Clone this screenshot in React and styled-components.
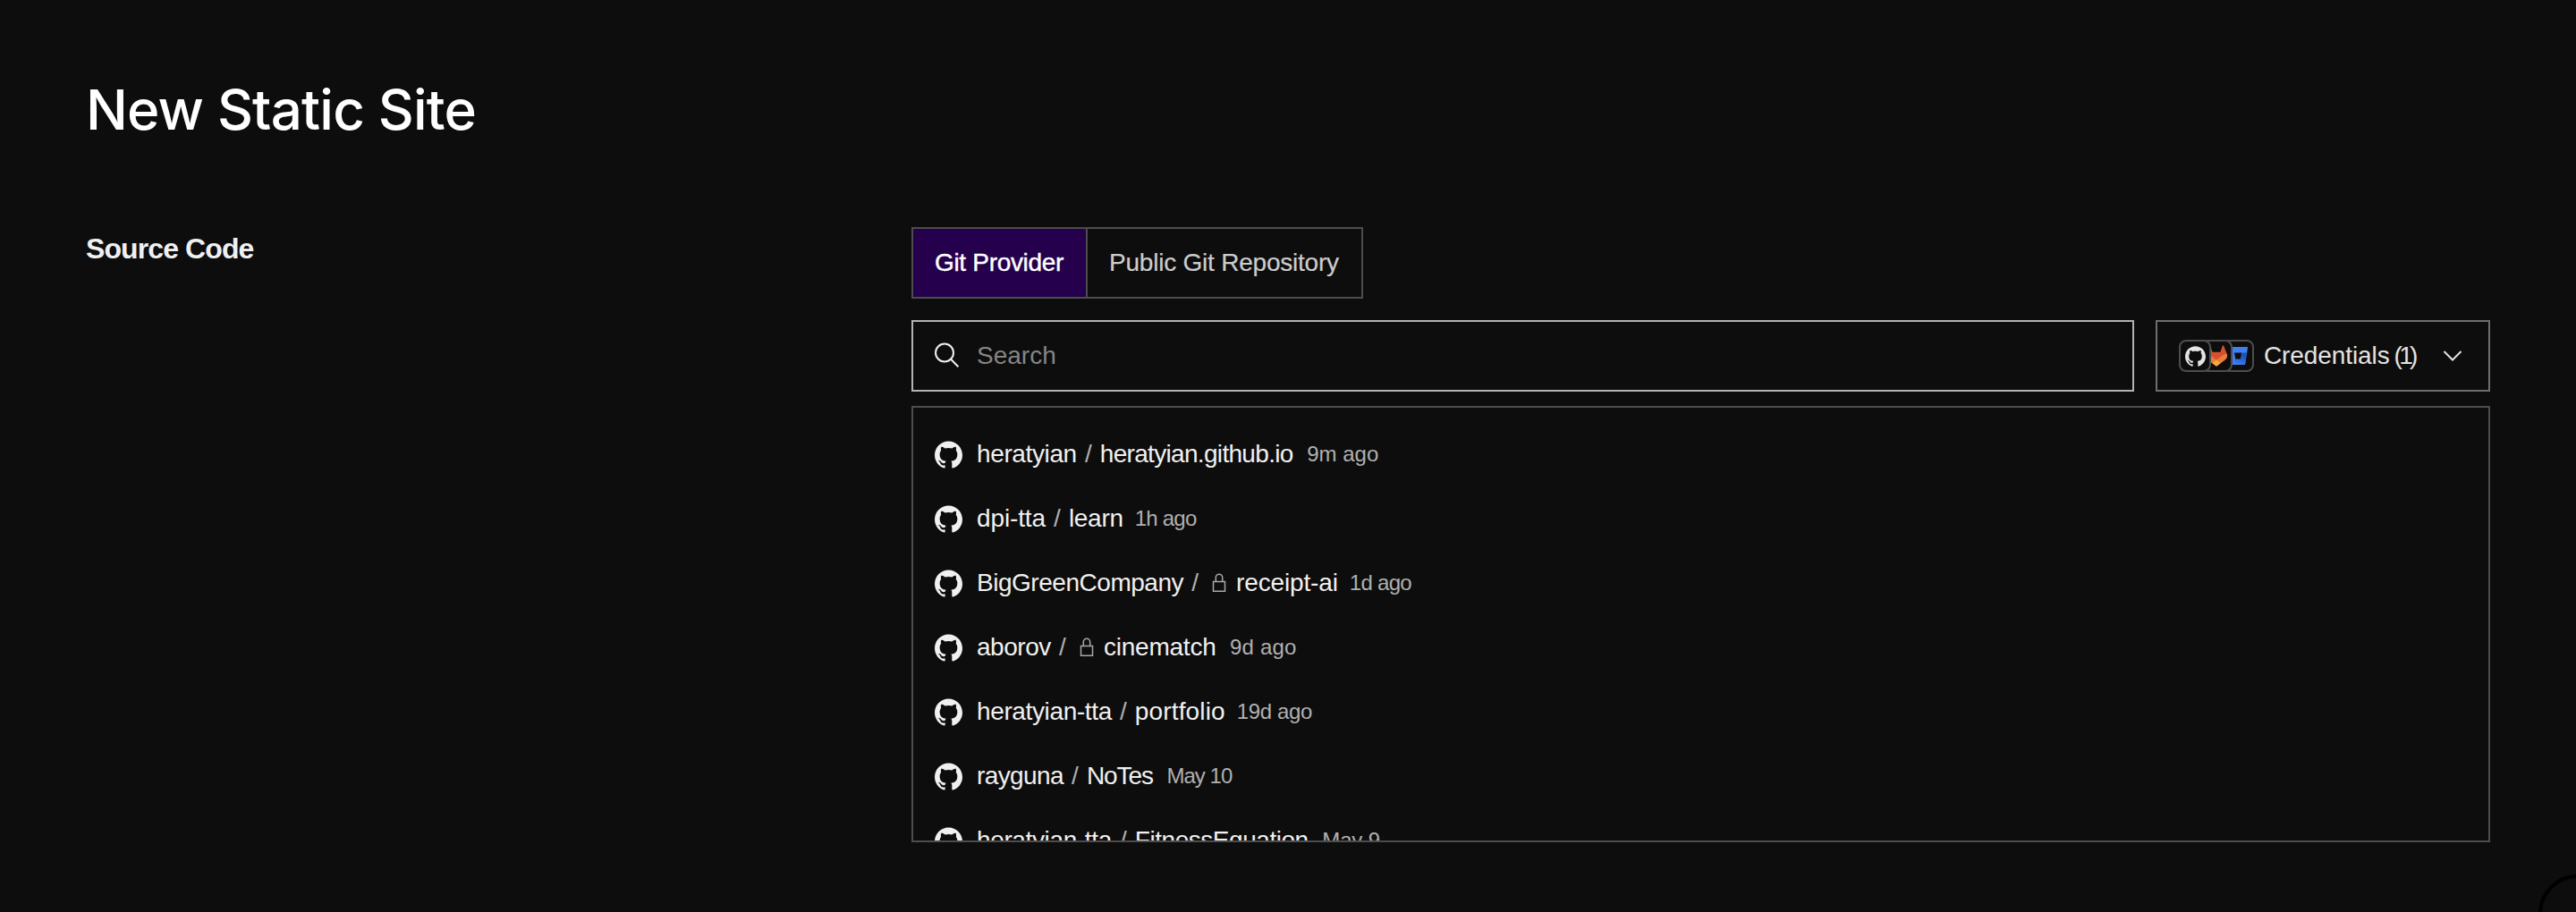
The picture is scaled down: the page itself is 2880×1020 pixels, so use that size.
import React from "react";
import styled, { createGlobalStyle } from "styled-components";

const color = {
  page: "#0d0d0d",
  line: "#4d4d4d",
  lineMid: "#6e6e6e",
  lineStrong: "#b3b3b3",
  text: "#f0f0f0",
  soft: "#cccccc",
  muted: "#b0b0b0",
  placeholder: "#858585",
  accent: "#25004d",
};

const GlobalStyle = createGlobalStyle`
  *, *::before, *::after { box-sizing: border-box; }
  body {
    margin: 0;
    background: ${color.page};
    color: ${color.text};
    font-family: "Liberation Sans", Arial, sans-serif;
    font-size: 28px;
    line-height: 40px;
    white-space: nowrap;
  }
`;

const Page = styled.main`
  position: relative;
  height: 1020px;
  overflow: hidden;
  padding: 83px 96px 0;
`;

const Title = styled.h1`
  margin: 0;
  color: #fff;
  font-family: Inter, sans-serif;
  font-size: 62px;
  font-weight: 500;
  line-height: 80px;
  letter-spacing: -0.83px;
`;

const Section = styled.section`
  display: grid;
  grid-template-columns: 923px 1fr;
  margin-top: 91px;
`;

const SectionTitle = styled.h2`
  margin: 4px 0 0;
  font-size: 32px;
  font-weight: 700;
  line-height: 40px;
  letter-spacing: -0.9px;
`;

const Panel = styled.div`
  display: flex;
  flex-direction: column;
  width: 1765px;
`;

const Tabs = styled.div`
  display: flex;
`;

const Tab = styled.button`
  width: ${(p) => p.$width}px;
  height: 80px;
  margin: 0 0 0 ${(p) => (p.$joined ? -2 : 0)}px;
  padding: 0 0 0 24px;
  border: 2px solid ${color.line};
  background: ${(p) => (p.$active ? color.accent : "transparent")};
  color: ${(p) => (p.$active ? "#fff" : color.soft)};
  font: inherit;
  text-align: left;
  letter-spacing: ${(p) => (p.$active ? -0.32 : -0.22)}px;
  -webkit-text-stroke: ${(p) => (p.$active ? 0.4 : 0.2)}px currentColor;
`;

const Filters = styled.div`
  display: flex;
  gap: 24px;
  margin: 24px 0 16px;
`;

const SearchBox = styled.label`
  flex: 1;
  display: flex;
  align-items: center;
  gap: 17px;
  height: 80px;
  padding: 0 24px;
  border: 2px solid ${color.lineStrong};
`;

const SearchInput = styled.input`
  flex: 1;
  padding: 0;
  border: 0;
  outline: 0;
  background: none;
  color: ${color.text};
  font: inherit;
  &::placeholder { color: ${color.placeholder}; opacity: 1; }
`;

const CredentialsButton = styled.button`
  display: flex;
  align-items: center;
  width: 374px;
  height: 80px;
  padding: 0 29px 0 24px;
  border: 2px solid ${color.lineMid};
  background: none;
  color: #e3e3e3;
  font: inherit;
`;

const ProviderStack = styled.span`
  display: flex;
  margin-right: 11px;
`;

const ProviderChip = styled.span`
  position: relative;
  z-index: ${(p) => p.$layer};
  display: flex;
  align-items: center;
  justify-content: center;
  width: 36px;
  height: 36px;
  margin-left: ${(p) => (p.$overlap ? -12 : 0)}px;
  border: 2px solid ${color.line};
  border-radius: 8px;
  background: ${color.page};
  & > svg { flex: none; }
`;

const CredentialsLabel = styled.span`
  letter-spacing: -0.1px;
`;

const Count = styled.span`
  margin-left: 5px;
  letter-spacing: -3.7px;
`;

const Chevron = styled.svg`
  margin-left: auto;
`;

const RepoList = styled.ul`
  height: 488px;
  margin: 0;
  padding: 16px 0 0;
  border: 2px solid ${color.line};
  list-style: none;
  overflow: hidden;
`;

const RepoRow = styled.li`
  display: flex;
  align-items: center;
  height: 72px;
  padding-left: 24px;
`;

const Name = styled.span`
  letter-spacing: ${(p) => p.$tracking}px;
`;

const Owner = styled(Name)`
  margin-left: 16px;
`;

const Slash = styled.span`
  width: 10px;
  margin: 0 8px;
  color: ${color.muted};
  text-align: center;
`;

const Lock = styled.svg`
  margin: 0 11px 0 6px;
`;

const Age = styled.span`
  margin-left: ${(p) => (p.$tight ? 13 : 15.5)}px;
  color: ${color.muted};
  font-size: 24px;
  letter-spacing: ${(p) => p.$tracking}px;
`;

const HelpButton = styled.div`
  position: absolute;
  left: 2838px;
  top: 978px;
  width: 88px;
  height: 88px;
  border: 4px solid #000;
  border-radius: 50%;
`;

const GithubMark = ({ size, fill = color.text }) => (
  <svg width={size} height={size} viewBox="0 0 24 24" fill={fill}>
    <path d="M12 .297c-6.63 0-12 5.373-12 12 0 5.303 3.438 9.8 8.205 11.385.6.113.82-.258.82-.577 0-.285-.01-1.04-.015-2.04-3.338.724-4.042-1.61-4.042-1.61C4.422 18.07 3.633 17.7 3.633 17.7c-1.087-.744.084-.729.084-.729 1.205.084 1.838 1.236 1.838 1.236 1.07 1.835 2.809 1.305 3.495.998.108-.776.417-1.305.76-1.605-2.665-.3-5.466-1.332-5.466-5.93 0-1.31.465-2.38 1.235-3.22-.135-.303-.54-1.523.105-3.176 0 0 1.005-.322 3.3 1.23.96-.267 1.98-.399 3-.405 1.02.006 2.04.138 3 .405 2.28-1.552 3.285-1.23 3.285-1.23.645 1.653.24 2.873.12 3.176.765.84 1.23 1.91 1.23 3.22 0 4.61-2.805 5.625-5.475 5.92.42.36.81 1.096.81 2.22 0 1.606-.015 2.896-.015 3.286 0 .315.21.69.825.57C20.565 22.092 24 17.592 24 12.297c0-6.627-5.373-12-12-12" />
  </svg>
);

const GitlabMark = () => (
  <svg width="24" height="24" viewBox="0 0 24 24">
    <clipPath id="fox">
      <path d="m23.6 9.59-.03-.09L20.3.98a.85.85 0 0 0-.34-.4.87.87 0 0 0-1.29.49l-2.2 6.75H7.54L5.33 1.07a.86.86 0 0 0-1.29-.49.86.86 0 0 0-.34.4L.43 9.5l-.03.09a6.07 6.07 0 0 0 2.01 7.01l.04.03 4.98 3.73 2.46 1.86 1.5 1.13a1 1 0 0 0 1.22 0l1.5-1.13 2.46-1.86 5.02-3.76a6.07 6.07 0 0 0 2.01-7.01z" />
    </clipPath>
    <g clipPath="url(#fox)">
      <path fill="#d6502f" d="M0 0h24v24H0z" />
      <path fill="#e97c38" d="M0 9.2c2 .5 3.6 1.2 5 2.2l7 5.1 7-5.1c1.4-1 3-1.7 5-2.2V24H0z" />
      <path fill="#f0aa3f" d="m12 16.5 4.700 3.600L12 24l-4.700-3.900z" />
    </g>
  </svg>
);

const BitbucketMark = () => (
  <svg width="24" height="24" viewBox="0 0 24 24">
    <defs>
      <linearGradient id="bucket" x1="13" y1="10" x2="9" y2="21" gradientUnits="userSpaceOnUse">
        <stop offset="0" stopColor="#1f52b8" />
        <stop offset="1" stopColor="#3e7ff2" />
      </linearGradient>
    </defs>
    <path fill="#3e7ff2" d="M1.800 2h20.500c.5 0 .8.400.7.900l-2.900 18.300c-.1.500-.4.800-.9.800H5.100c-.6 0-1-.4-1.100-.9L1.100 2.900C1 2.400 1.300 2 1.800 2z" />
    <path fill="url(#bucket)" d="M22 8.500h-6L15 15.500H9.300l-5 6.100c.2.200.5.400.8.400h14.100c.5 0 .8-.3.900-.8z" />
    <path fill={color.page} d="M8 8.500h8L15 15.500H9.200z" />
  </svg>
);

const SearchIcon = () => (
  <svg width="30" height="30" viewBox="0 0 30 30" fill="none" stroke="#f0f0f0" strokeWidth="2">
    <circle cx="11" cy="11.500" r="10" />
    <path d="m18.100 18.800 8.300 8.500" />
  </svg>
);

const LockIcon = () => (
  <Lock width="16" height="22" viewBox="0 0 16 22" fill="none" stroke="#a8a8a8" strokeWidth="1.500">
    <path d="M1.500 9.500h13v10.700h-13zM4.300 9.500V4.900a3.700 3.700 0 0 1 7.400 0v4.600" />
  </Lock>
);

const repos = [
  { owner: ["heratyian", -0.38], name: ["heratyian.github.io", -0.68], age: ["9m ago", 0] },
  { owner: ["dpi-tta", -0.13], name: ["learn", -0.3], age: ["1h ago", -0.76] },
  { owner: ["BigGreenCompany", -0.47], locked: true, name: ["receipt-ai", -0.15], age: ["1d ago", -0.7] },
  { owner: ["aborov", -0.45], locked: true, name: ["cinematch", -0.22], age: ["9d ago", 0.2] },
  { owner: ["heratyian-tta", -0.37], name: ["portfolio", 0.14], age: ["19d ago", -0.35] },
  { owner: ["rayguna", -0.6], name: ["NoTes", -1.1], age: ["May 10", -0.96] },
  { owner: ["heratyian-tta", -0.37], name: ["FitnessEquation", -0.46], age: ["May 9", -0.1] },
];

const Repo = ({ owner, name, age, locked }) => (
  <RepoRow>
    <GithubMark size={31} />
    <Owner $tracking={owner[1]}>{owner[0]}</Owner>
    <Slash>/</Slash>
    {locked && <LockIcon />}
    <Name $tracking={name[1]}>{name[0]}</Name>
    <Age $tight={age[0].startsWith("1")} $tracking={age[1]}>{age[0]}</Age>
  </RepoRow>
);

export default function App() {
  return (
    <Page>
      <GlobalStyle />
      <Title>New Static Site</Title>
      <Section>
        <SectionTitle>Source Code</SectionTitle>
        <Panel>
          <Tabs>
            <Tab $active $width={197}>Git Provider</Tab>
            <Tab $joined $width={310}>Public Git Repository</Tab>
          </Tabs>
          <Filters>
            <SearchBox>
              <SearchIcon />
              <SearchInput placeholder="Search" />
            </SearchBox>
            <CredentialsButton>
              <ProviderStack>
                <ProviderChip $layer={3}><GithubMark size={23} fill="#e3e3e3" /></ProviderChip>
                <ProviderChip $layer={2} $overlap><GitlabMark /></ProviderChip>
                <ProviderChip $layer={1} $overlap><BitbucketMark /></ProviderChip>
              </ProviderStack>
              <CredentialsLabel>Credentials</CredentialsLabel>
              <Count>(1)</Count>
              <Chevron width="22" height="14" viewBox="0 0 22 14" fill="none" stroke="#e3e3e3" strokeWidth="2">
                <path d="m1.500 2 9.500 9.500L20.500 2" />
              </Chevron>
            </CredentialsButton>
          </Filters>
          <RepoList>
            {repos.map((repo, i) => (
              <Repo key={i} {...repo} />
            ))}
          </RepoList>
        </Panel>
      </Section>
      <HelpButton />
    </Page>
  );
}
